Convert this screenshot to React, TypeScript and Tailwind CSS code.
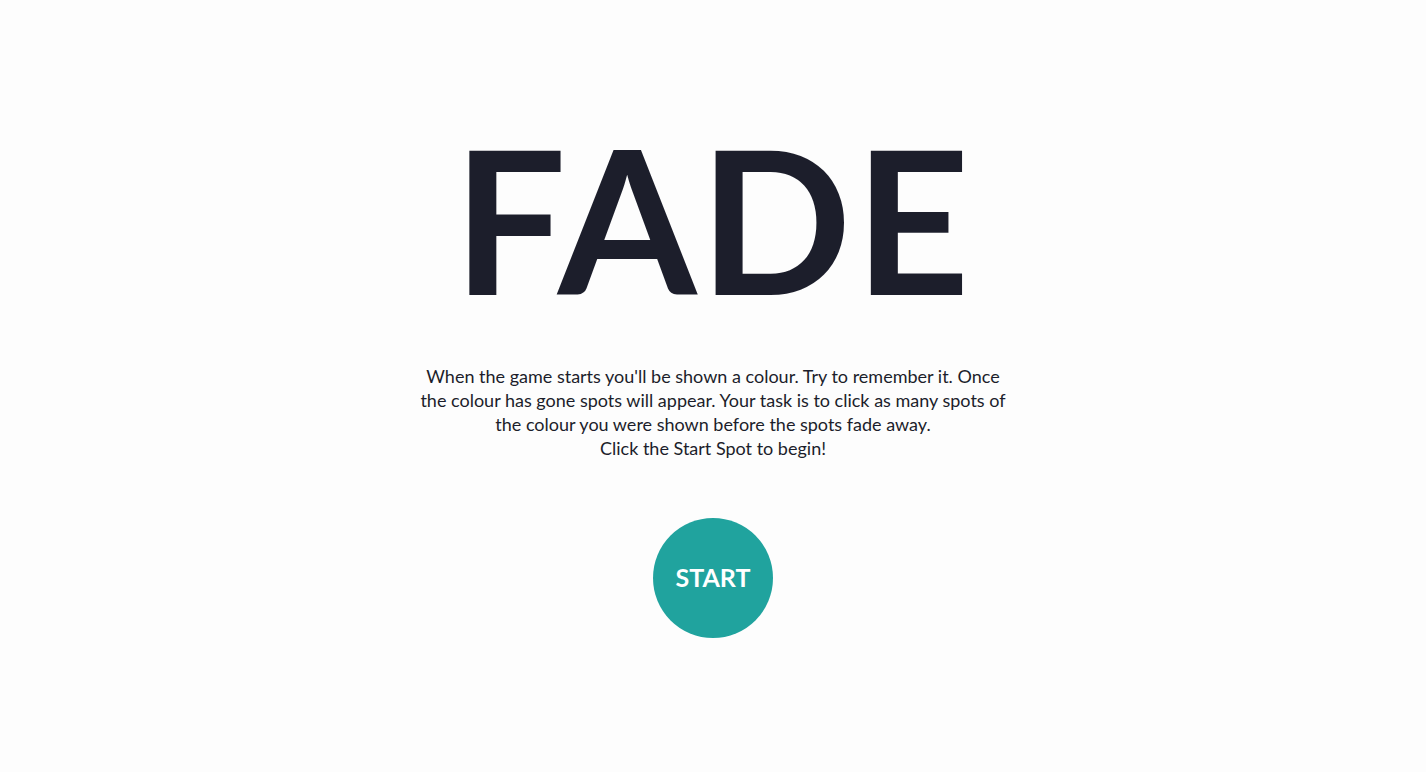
import React from 'react';

const App = () => {
  return (
    <div className="min-h-[772px] w-full bg-[#fdfdfd] flex flex-col items-center text-[#1c1e2b] font-['Lato','Liberation_Sans',sans-serif]">
      <h1 className="mt-[108px] text-[200px] leading-[220px] font-bold tracking-[3px]">FADE</h1>
      <p className="mt-[36px] w-[592px] text-center text-[18px] leading-[24px]">
        When the game starts you'll be shown a colour. Try to remember it. Once the colour has gone spots will appear. Your task is to click as many spots of the colour you were shown before the spots fade away.
        <br />
        Click the Start Spot to begin!
      </p>
      <button className="mt-[58px] w-[120px] h-[120px] rounded-full bg-[#20a39e] text-white text-[25px] font-bold flex items-center justify-center">
        START
      </button>
    </div>
  );
};

export default App;
